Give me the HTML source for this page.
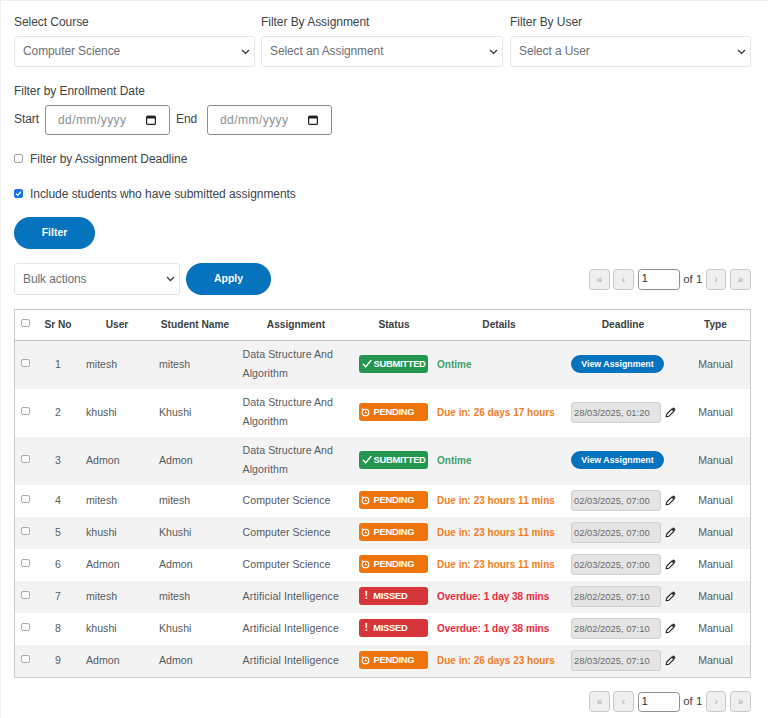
<!DOCTYPE html>
<html lang="en">
<head>
<meta charset="utf-8">
<title>Assignment Report</title>
<style>
*{box-sizing:border-box;margin:0;padding:0}
html,body{width:768px;height:718px;overflow:hidden;background:#fff}
body{font-family:"Liberation Sans",sans-serif;font-size:12px;color:#3c434a;position:relative;border-left:1px solid #efefef;border-top:1px solid #efefef}
.abs{position:absolute;white-space:nowrap}
.lbl{font-size:12px;color:#40454a;line-height:16px;letter-spacing:-.05px}
.sel{position:absolute;height:31px;border:1px solid #e5e6e7;border-radius:3px;background:#fff;font-size:12px;color:#6c7176;line-height:29px;padding-left:8px;letter-spacing:-.1px}
.sel svg{position:absolute;right:4.4px;top:12px}
.date{position:absolute;height:30px;width:125px;border:1px solid #8c8f94;border-radius:3px;background:#fff;font-size:12px;color:#8a8f94;line-height:28px;padding-left:12px;letter-spacing:.45px}
.date svg{position:absolute;right:13.5px;top:9px}
.cb{position:absolute;width:9px;height:9px;border:1px solid #a2a2a2;border-radius:2px;background:#fff}
.cb.on{background:#1670f5;border-color:#1670f5}
.btn{position:absolute;height:32px;border-radius:16px;background:#0673be;color:#fff;font-weight:bold;font-size:10.5px;line-height:31px;text-align:center}
.pg{position:absolute;height:20.5px}
.pg span.b{position:absolute;top:0;width:20.5px;height:20.5px;border:1px solid #c8c8c8;border-radius:3.5px;background:#efefef;color:#a9a9a9;font-size:10px;line-height:19.5px;text-align:center}
.pg .inp{position:absolute;top:.3px;left:48.8px;width:42px;height:20.2px;border:1px solid #8f8f8f;border-radius:3.5px;background:#fff;color:#2c3338;font-size:11.5px;line-height:17.5px;padding-left:2.5px}
.pg .of{position:absolute;top:0;left:94px;font-size:11.5px;line-height:20.5px;color:#3c434a}
table{position:absolute;left:13px;top:308px;width:737px;border-collapse:separate;border-spacing:0;border:1px solid #cacbcd;table-layout:fixed;font-size:10.6px;color:#565b60}
th{height:31px;font-weight:bold;color:#3a3f44;font-size:10.2px;text-align:center;border-bottom:1px solid #c4c5c7;vertical-align:middle;padding-bottom:2px}
td{vertical-align:middle;text-align:left;line-height:19px;white-space:nowrap;padding-bottom:2px}
tr.t td{height:48px}
tr.s td{height:32px}
tr.odd td{background:#f3f3f4}
td.c,td.m{text-align:center}
.cbx{display:inline-block;width:8.5px;height:8.5px;position:relative;top:-1.5px;left:-.5px;border:1px solid #adadad;border-radius:2px;background:#fff;vertical-align:middle}
.bd{display:inline-block;width:69px;height:18px;border-radius:3px;color:#fff;font-weight:bold;font-size:9.4px;letter-spacing:-.3px;line-height:17px;padding-left:3px;vertical-align:middle;white-space:nowrap;overflow:hidden}
.bd.g{background:#249650}
.bd.o{background:#ee740d}
.bd.r{background:#d6363a}
.bd svg{vertical-align:-1px;margin-right:3px}
.dt{font-weight:bold;font-size:10px}
.dt.g{color:#45a062}
.dt.o{color:#f17e25}
.dt.r{color:#f0293c}
.va{display:inline-block;width:93px;height:18px;border-radius:9px;background:#0673be;color:#fff;font-weight:bold;font-size:8.8px;line-height:18px;text-align:center;vertical-align:middle;position:relative;top:-1px}
.di{display:inline-block;width:90px;height:21px;border:1px solid #cfcfcf;border-radius:3px;background:#e4e4e4;color:#6a6a6a;font-size:9.4px;line-height:20px;padding-left:2px;vertical-align:middle}
.pen{vertical-align:middle;margin-left:4px;position:relative;top:.5px}
</style>
</head>
<body>

<div class="abs lbl" style="left:13px;top:13px">Select Course</div>
<div class="abs lbl" style="left:260px;top:13px">Filter By Assignment</div>
<div class="abs lbl" style="left:509px;top:13px">Filter By User</div>

<div class="sel" style="left:13px;top:35px;width:241px;height:31px;line-height:29px">Computer Science<svg width="9" height="6" viewBox="0 0 9 6"><path d="M1 1l3.5 3.5L8 1" fill="none" stroke="#3c434a" stroke-width="1.4"/></svg></div>
<div class="sel" style="left:260px;top:35px;width:242px;height:31px;line-height:29px">Select an Assignment<svg width="9" height="6" viewBox="0 0 9 6"><path d="M1 1l3.5 3.5L8 1" fill="none" stroke="#3c434a" stroke-width="1.4"/></svg></div>
<div class="sel" style="left:509px;top:35px;width:241px;height:31px;line-height:29px">Select a User<svg width="9" height="6" viewBox="0 0 9 6"><path d="M1 1l3.5 3.5L8 1" fill="none" stroke="#3c434a" stroke-width="1.4"/></svg></div>

<div class="abs lbl" style="left:13px;top:82px">Filter by Enrollment Date</div>
<div class="abs lbl" style="left:13px;top:110px">Start</div>
<div class="date" style="left:44px;top:104px">dd/mm/yyyy<svg width="10" height="10" viewBox="0 0 10 10"><rect x=".6" y="1.4" width="8.8" height="8" rx="1" fill="none" stroke="#1d2327" stroke-width="1.2"/><rect x=".6" y=".8" width="8.8" height="2.6" rx=".6" fill="#1d2327"/></svg></div>
<div class="abs lbl" style="left:175px;top:110px">End</div>
<div class="date" style="left:206px;top:104px">dd/mm/yyyy<svg width="10" height="10" viewBox="0 0 10 10"><rect x=".6" y="1.4" width="8.8" height="8" rx="1" fill="none" stroke="#1d2327" stroke-width="1.2"/><rect x=".6" y=".8" width="8.8" height="2.6" rx=".6" fill="#1d2327"/></svg></div>

<div class="cb" style="left:13px;top:153px"></div>
<div class="abs lbl" style="left:29px;top:150px">Filter by Assignment Deadline</div>

<div class="cb on" style="left:13px;top:188px"><svg width="7" height="7" viewBox="0 0 7 7" style="position:absolute;left:0;top:0"><path d="M1 3.6l1.7 1.7L6 1.6" fill="none" stroke="#fff" stroke-width="1.3"/></svg></div>
<div class="abs lbl" style="left:29px;top:185px">Include students who have submitted assignments</div>

<div class="btn" style="left:13px;top:216px;width:81px">Filter</div>

<div class="sel" style="left:13px;top:262px;width:166px;height:32px;line-height:30px">Bulk actions<svg width="9" height="6" viewBox="0 0 9 6"><path d="M1 1l3.5 3.5L8 1" fill="none" stroke="#3c434a" stroke-width="1.4"/></svg></div>
<div class="btn" style="left:185px;top:262px;width:85px">Apply</div>

<div class="pg" style="left:588.2px;top:268.2px;width:162px">
  <span class="b" style="left:0">«</span><span class="b" style="left:24.1px">‹</span>
  <span class="inp">1</span><span class="of">of 1</span>
  <span class="b" style="left:116.8px">›</span><span class="b" style="left:141px">»</span>
</div>

<table>
<colgroup><col style="width:22px"><col style="width:42px"><col style="width:76px"><col style="width:80px"><col style="width:122px"><col style="width:74px"><col style="width:136px"><col style="width:114px"><col style="width:69px"></colgroup>
<thead><tr><th><span class="cbx" style="top:-2px"></span></th><th>Sr No</th><th>User</th><th>Student Name</th><th>Assignment</th><th>Status</th><th>Details</th><th style="padding-right:2px">Deadline</th><th>Type</th></tr></thead>
<tbody>
<tr class="t odd"><td class="c"><span class="cbx"></span></td><td class="c">1</td><td style="padding-left:7px">mitesh</td><td style="padding-left:4px">mitesh</td><td style="padding-left:7.6px;letter-spacing:.05px">Data Structure And<br>Algorithm</td><td style="padding-left:2px;padding-bottom:3px"><span class="bd g"><svg style="margin-right:1.6px" width="10" height="9" viewBox="0 0 10 9"><path d="M.8 4.8l2.9 2.9L9.2 1.2" fill="none" stroke="#fff" stroke-width="1.5"/></svg>SUBMITTED</span></td><td style="padding-left:6px"><span class="dt g">Ontime</span></td><td style="padding-left:4px"><span class="va">View Assignment</span></td><td class="m">Manual</td></tr>
<tr class="t"><td class="c"><span class="cbx"></span></td><td class="c">2</td><td style="padding-left:7px">khushi</td><td style="padding-left:4px">Khushi</td><td style="padding-left:7.6px;letter-spacing:.05px">Data Structure And<br>Algorithm</td><td style="padding-left:2px;padding-bottom:3px"><span class="bd o"><svg style="margin:0 3.2px 0 -.6px;vertical-align:-2px" width="9" height="10" viewBox="0 0 9 10"><circle cx="4.5" cy="5.6" r="3.3" fill="none" stroke="#fff" stroke-width="1.1"/><path d="M4.5 3.8v2h1.5M.8 1.8l1.8 1.2" fill="none" stroke="#fff" stroke-width="1.1"/></svg>PENDING</span></td><td style="padding-left:6px"><span class="dt o">Due in: 26 days 17 hours</span></td><td style="padding-left:4px"><span class="di">28/03/2025, 01:20</span><svg class="pen" width="11" height="11" viewBox="0 0 11 11"><path d="M1.2 9.8l.6-2.8 4.9-4.9 2.2 2.2L4 9.2z" fill="none" stroke="#1d2327" stroke-width="1.1" stroke-linejoin="round"/><path d="M7 1.8l1-1a.8.8 0 0 1 1.1 0l1.1 1.1a.8.8 0 0 1 0 1.1l-1 1z" fill="#1d2327"/></svg></td><td class="m">Manual</td></tr>
<tr class="t odd"><td class="c"><span class="cbx"></span></td><td class="c">3</td><td style="padding-left:7px">Admon</td><td style="padding-left:4px">Admon</td><td style="padding-left:7.6px;letter-spacing:.05px">Data Structure And<br>Algorithm</td><td style="padding-left:2px;padding-bottom:3px"><span class="bd g"><svg style="margin-right:1.6px" width="10" height="9" viewBox="0 0 10 9"><path d="M.8 4.8l2.9 2.9L9.2 1.2" fill="none" stroke="#fff" stroke-width="1.5"/></svg>SUBMITTED</span></td><td style="padding-left:6px"><span class="dt g">Ontime</span></td><td style="padding-left:4px"><span class="va">View Assignment</span></td><td class="m">Manual</td></tr>
<tr class="s"><td class="c"><span class="cbx"></span></td><td class="c">4</td><td style="padding-left:7px">mitesh</td><td style="padding-left:4px">mitesh</td><td style="padding-left:7.6px;letter-spacing:.05px">Computer Science</td><td style="padding-left:2px;padding-bottom:3px"><span class="bd o"><svg style="margin:0 3.2px 0 -.6px;vertical-align:-2px" width="9" height="10" viewBox="0 0 9 10"><circle cx="4.5" cy="5.6" r="3.3" fill="none" stroke="#fff" stroke-width="1.1"/><path d="M4.5 3.8v2h1.5M.8 1.8l1.8 1.2" fill="none" stroke="#fff" stroke-width="1.1"/></svg>PENDING</span></td><td style="padding-left:6px"><span class="dt o">Due in: 23 hours 11 mins</span></td><td style="padding-left:4px"><span class="di">02/03/2025, 07:00</span><svg class="pen" width="11" height="11" viewBox="0 0 11 11"><path d="M1.2 9.8l.6-2.8 4.9-4.9 2.2 2.2L4 9.2z" fill="none" stroke="#1d2327" stroke-width="1.1" stroke-linejoin="round"/><path d="M7 1.8l1-1a.8.8 0 0 1 1.1 0l1.1 1.1a.8.8 0 0 1 0 1.1l-1 1z" fill="#1d2327"/></svg></td><td class="m">Manual</td></tr>
<tr class="s odd"><td class="c"><span class="cbx"></span></td><td class="c">5</td><td style="padding-left:7px">khushi</td><td style="padding-left:4px">Khushi</td><td style="padding-left:7.6px;letter-spacing:.05px">Computer Science</td><td style="padding-left:2px;padding-bottom:3px"><span class="bd o"><svg style="margin:0 3.2px 0 -.6px;vertical-align:-2px" width="9" height="10" viewBox="0 0 9 10"><circle cx="4.5" cy="5.6" r="3.3" fill="none" stroke="#fff" stroke-width="1.1"/><path d="M4.5 3.8v2h1.5M.8 1.8l1.8 1.2" fill="none" stroke="#fff" stroke-width="1.1"/></svg>PENDING</span></td><td style="padding-left:6px"><span class="dt o">Due in: 23 hours 11 mins</span></td><td style="padding-left:4px"><span class="di">02/03/2025, 07:00</span><svg class="pen" width="11" height="11" viewBox="0 0 11 11"><path d="M1.2 9.8l.6-2.8 4.9-4.9 2.2 2.2L4 9.2z" fill="none" stroke="#1d2327" stroke-width="1.1" stroke-linejoin="round"/><path d="M7 1.8l1-1a.8.8 0 0 1 1.1 0l1.1 1.1a.8.8 0 0 1 0 1.1l-1 1z" fill="#1d2327"/></svg></td><td class="m">Manual</td></tr>
<tr class="s"><td class="c"><span class="cbx"></span></td><td class="c">6</td><td style="padding-left:7px">Admon</td><td style="padding-left:4px">Admon</td><td style="padding-left:7.6px;letter-spacing:.05px">Computer Science</td><td style="padding-left:2px;padding-bottom:3px"><span class="bd o"><svg style="margin:0 3.2px 0 -.6px;vertical-align:-2px" width="9" height="10" viewBox="0 0 9 10"><circle cx="4.5" cy="5.6" r="3.3" fill="none" stroke="#fff" stroke-width="1.1"/><path d="M4.5 3.8v2h1.5M.8 1.8l1.8 1.2" fill="none" stroke="#fff" stroke-width="1.1"/></svg>PENDING</span></td><td style="padding-left:6px"><span class="dt o">Due in: 23 hours 11 mins</span></td><td style="padding-left:4px"><span class="di">02/03/2025, 07:00</span><svg class="pen" width="11" height="11" viewBox="0 0 11 11"><path d="M1.2 9.8l.6-2.8 4.9-4.9 2.2 2.2L4 9.2z" fill="none" stroke="#1d2327" stroke-width="1.1" stroke-linejoin="round"/><path d="M7 1.8l1-1a.8.8 0 0 1 1.1 0l1.1 1.1a.8.8 0 0 1 0 1.1l-1 1z" fill="#1d2327"/></svg></td><td class="m">Manual</td></tr>
<tr class="s odd"><td class="c"><span class="cbx"></span></td><td class="c">7</td><td style="padding-left:7px">mitesh</td><td style="padding-left:4px">mitesh</td><td style="padding-left:7.6px;letter-spacing:.05px"><span style="letter-spacing:.12px">Artificial Intelligence</span></td><td style="padding-left:2px;padding-bottom:3px"><span class="bd r"><b style="margin:0 5.5px 0 2.5px;font-size:10.5px">!</b>MISSED</span></td><td style="padding-left:6px"><span class="dt r">Overdue: 1 day 38 mins</span></td><td style="padding-left:4px"><span class="di">28/02/2025, 07:10</span><svg class="pen" width="11" height="11" viewBox="0 0 11 11"><path d="M1.2 9.8l.6-2.8 4.9-4.9 2.2 2.2L4 9.2z" fill="none" stroke="#1d2327" stroke-width="1.1" stroke-linejoin="round"/><path d="M7 1.8l1-1a.8.8 0 0 1 1.1 0l1.1 1.1a.8.8 0 0 1 0 1.1l-1 1z" fill="#1d2327"/></svg></td><td class="m">Manual</td></tr>
<tr class="s"><td class="c"><span class="cbx"></span></td><td class="c">8</td><td style="padding-left:7px">khushi</td><td style="padding-left:4px">Khushi</td><td style="padding-left:7.6px;letter-spacing:.05px"><span style="letter-spacing:.12px">Artificial Intelligence</span></td><td style="padding-left:2px;padding-bottom:3px"><span class="bd r"><b style="margin:0 5.5px 0 2.5px;font-size:10.5px">!</b>MISSED</span></td><td style="padding-left:6px"><span class="dt r">Overdue: 1 day 38 mins</span></td><td style="padding-left:4px"><span class="di">28/02/2025, 07:10</span><svg class="pen" width="11" height="11" viewBox="0 0 11 11"><path d="M1.2 9.8l.6-2.8 4.9-4.9 2.2 2.2L4 9.2z" fill="none" stroke="#1d2327" stroke-width="1.1" stroke-linejoin="round"/><path d="M7 1.8l1-1a.8.8 0 0 1 1.1 0l1.1 1.1a.8.8 0 0 1 0 1.1l-1 1z" fill="#1d2327"/></svg></td><td class="m">Manual</td></tr>
<tr class="s odd"><td class="c"><span class="cbx"></span></td><td class="c">9</td><td style="padding-left:7px">Admon</td><td style="padding-left:4px">Admon</td><td style="padding-left:7.6px;letter-spacing:.05px"><span style="letter-spacing:.12px">Artificial Intelligence</span></td><td style="padding-left:2px;padding-bottom:3px"><span class="bd o"><svg style="margin:0 3.2px 0 -.6px;vertical-align:-2px" width="9" height="10" viewBox="0 0 9 10"><circle cx="4.5" cy="5.6" r="3.3" fill="none" stroke="#fff" stroke-width="1.1"/><path d="M4.5 3.8v2h1.5M.8 1.8l1.8 1.2" fill="none" stroke="#fff" stroke-width="1.1"/></svg>PENDING</span></td><td style="padding-left:6px"><span class="dt o">Due in: 26 days 23 hours</span></td><td style="padding-left:4px"><span class="di">28/03/2025, 07:10</span><svg class="pen" width="11" height="11" viewBox="0 0 11 11"><path d="M1.2 9.8l.6-2.8 4.9-4.9 2.2 2.2L4 9.2z" fill="none" stroke="#1d2327" stroke-width="1.1" stroke-linejoin="round"/><path d="M7 1.8l1-1a.8.8 0 0 1 1.1 0l1.1 1.1a.8.8 0 0 1 0 1.1l-1 1z" fill="#1d2327"/></svg></td><td class="m">Manual</td></tr>
</tbody>
</table>

<div class="pg" style="left:588.2px;top:690.4px;width:162px">
  <span class="b" style="left:0">«</span><span class="b" style="left:24.1px">‹</span>
  <span class="inp">1</span><span class="of">of 1</span>
  <span class="b" style="left:116.8px">›</span><span class="b" style="left:141px">»</span>
</div>

</body>
</html>
